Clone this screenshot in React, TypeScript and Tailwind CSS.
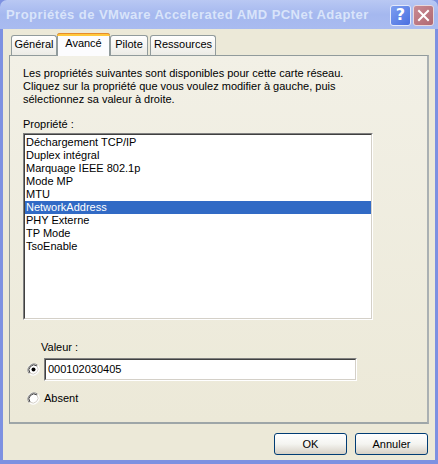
import React from "react";

const items = [
  "Déchargement TCP/IP",
  "Duplex intégral",
  "Marquage IEEE 802.1p",
  "Mode MP",
  "MTU",
  "NetworkAddress",
  "PHY Externe",
  "TP Mode",
  "TsoEnable",
];

function Radio({ checked }: { checked?: boolean }) {
  return (
    <svg width="13" height="13" viewBox="0 0 13 13" className="shrink-0">
      <circle cx="6.5" cy="6.5" r="6" fill="#ffffff" stroke="#f0efe6" />
      <path d="M2.3 10.7 A6 6 0 0 1 10.7 2.3" fill="none" stroke="#808080" strokeWidth="1" />
      <path d="M3 10 A5 5 0 0 1 10 3" fill="none" stroke="#404040" strokeWidth="1" />
      <path d="M10.7 2.3 A6 6 0 0 1 2.3 10.7" fill="none" stroke="#ffffff" strokeWidth="1" />
      <path d="M10 3 A5 5 0 0 1 3 10" fill="none" stroke="#d4d0c8" strokeWidth="1" />
      {checked && <circle cx="6.5" cy="6.5" r="2" fill="#000000" />}
    </svg>
  );
}

function Tab({ label, selected, w }: { label: string; selected?: boolean; w: string }) {
  if (selected) {
    return (
      <div
        className={`relative z-10 -mx-[2px] h-[23px] -mb-px ${w} rounded-t-[3px] border border-b-0 border-[#919b9c] bg-[#fcfcfe] flex justify-center pt-[3px]`}
      >
        <div className="absolute -left-px -right-px -top-px h-[3px] rounded-t-[3px] bg-[#ffc83c] border-t border-[#e68b2c]" />
        <span>{label}</span>
      </div>
    );
  }
  return (
    <div
      className={`h-[20px] ${w} rounded-t-[3px] border border-b-0 border-[#919b9c] bg-gradient-to-b from-[#ffffff] to-[#ecebe5] flex justify-center pt-[2px]`}
    >
      <span>{label}</span>
    </div>
  );
}

export default function App() {
  return (
    <div
      className="w-[438px] h-[464px] flex flex-col bg-[#7d91e1] px-[3px] pb-[4px] text-[11px] leading-[13px] text-black"
      style={{ fontFamily: '"Liberation Sans", Arial, sans-serif' }}
    >
      {/* Title bar */}
      <div className="-mx-[3px] h-[29px] shrink-0 flex items-center justify-between pl-[6px] pr-[4px] rounded-t-[7px] bg-gradient-to-b from-[#b9c8f3] via-[#a5b8ef] to-[#a9bbf0]">
        <span className="whitespace-nowrap text-[13px] font-bold text-[#d9e4fa] tracking-[0.45px]">
          Propriétés de VMware Accelerated AMD PCNet Adapter
        </span>
        <div className="flex gap-[2px] mt-[1px]">
          <div className="w-[21px] h-[21px] rounded-[3px] border border-[#e4e9fa] bg-gradient-to-br from-[#7d9ef0] to-[#4c6fe0] flex items-center justify-center">
            <span className="text-white text-[16px] font-bold leading-none" style={{ fontFamily: '"DejaVu Sans", sans-serif' }}>?</span>
          </div>
          <div className="w-[21px] h-[21px] rounded-[3px] border border-[#e8d8dc] bg-gradient-to-br from-[#c98a93] to-[#b06872] flex items-center justify-center">
            <svg width="13" height="13" viewBox="0 0 13 13">
              <path d="M2 2 L11 11 M11 2 L2 11" stroke="#ffffff" strokeWidth="2" strokeLinecap="square" />
            </svg>
          </div>
        </div>
      </div>

      {/* Body */}
      <div className="flex-1 flex flex-col bg-[#ece9d8] px-[6px] pt-[4px]">
        {/* Tabs */}
        <div className="flex items-end h-[22px] pl-[2px] gap-[2px]">
          <Tab label="Général" w="w-[46px]" />
          <Tab label="Avancé" w="w-[53px]" selected />
          <Tab label="Pilote" w="w-[38px]" />
          <Tab label="Ressources" w="w-[66px]" />
        </div>

        {/* Panel */}
        <div className="w-[420px] h-[369px] border border-[#919b9c] border-b-2 border-r-2 border-b-[#9ea6a8] border-r-[#aab0b2] bg-gradient-to-b from-[#f2f0e6] to-[#ece9d8] px-[13px] pt-[11px] flex flex-col">
          <p>
            Les propriétés suivantes sont disponibles pour cette carte réseau.
            <br />
            Cliquez sur la propriété que vous voulez modifier à gauche, puis
            <br />
            sélectionnez sa valeur à droite.
          </p>
          <div className="mt-[12px]">Propriété :</div>
          <div className="mt-[2px] w-[350px] h-[187px] border-t border-l border-[#808080] border-b border-r border-b-[#ffffff] border-r-[#ffffff]">
            <div className="w-full h-full border-t border-l border-[#404040] border-b border-r border-b-[#d4d0c8] border-r-[#d4d0c8] bg-white pt-[1px]">
              {items.map((it) => (
                <div
                  key={it}
                  className={`h-[13px] pl-[1px] leading-[13px] ${
                    it === "NetworkAddress" ? "bg-[#316ac5] text-white" : ""
                  }`}
                >
                  {it}
                </div>
              ))}
            </div>
          </div>

          <div className="mt-[21px] pl-[18px]">Valeur :</div>
          <div className="mt-[4px] flex items-center">
            <div className="w-[21px] flex justify-start pl-[4px]">
              <Radio checked />
            </div>
            <div className="w-[313px] h-[23px] border-t border-l border-[#808080] border-b border-r border-b-[#ffffff] border-r-[#ffffff]">
              <div className="w-full h-full border-t border-l border-[#404040] border-b border-r border-b-[#d4d0c8] border-r-[#d4d0c8] bg-white flex items-center pl-[2px]">
                000102030405
              </div>
            </div>
          </div>
          <div className="mt-[11px] flex items-center">
            <div className="w-[21px] flex justify-start pl-[4px]">
              <Radio />
            </div>
            <span>Absent</span>
          </div>
        </div>

        {/* Buttons */}
        <div className="flex justify-end gap-[8px] mt-[9px] pr-[1px]">
          {["OK", "Annuler"].map((b) => (
            <div
              key={b}
              className="w-[73px] h-[22px] rounded-[3px] border border-[#003c74] bg-gradient-to-b from-[#ffffff] via-[#f4f4f0] to-[#d6d0c5] flex items-center justify-center"
            >
              {b}
            </div>
          ))}
        </div>
      </div>
    </div>
  );
}
